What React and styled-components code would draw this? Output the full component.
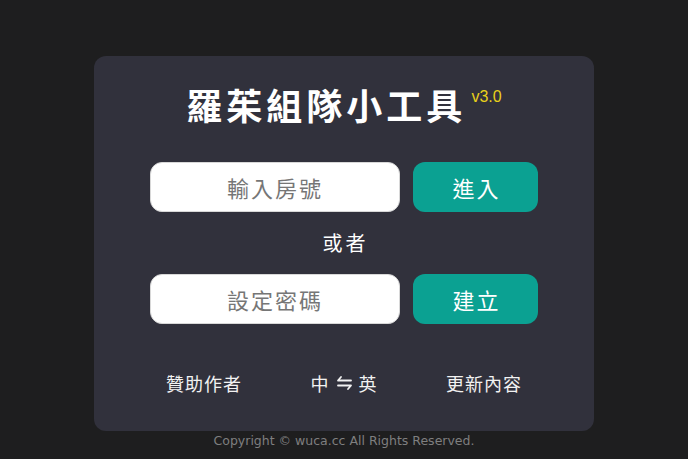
import React from 'react';
import styled, {createGlobalStyle} from 'styled-components';

const FONT = `"Noto Sans CJK TC", "Noto Sans", sans-serif`;
const TEAL = '#0ba192';

const GlobalStyle = createGlobalStyle`
  html, body {
    margin: 0;
    padding: 0;
    background: #1e1e1f;
    font-family: ${FONT};
  }
`;

const Page = styled.div`
  display: flex;
  flex-direction: column;
  align-items: center;
  padding-top: 56px;
  min-height: 403px;
`;

const Card = styled.div`
  width: 500px;
  height: 375px;
  box-sizing: border-box;
  background: #31313c;
  border-radius: 12px;
  display: flex;
  flex-direction: column;
  align-items: center;
  padding-top: 24px;
`;

const Title = styled.h1`
  margin: 0;
  font-size: 36px;
  line-height: 48px;
  font-weight: 700;
  color: #ffffff;
  letter-spacing: 4px;
  display: flex;
  align-items: flex-start;
  padding-left: 0;
`;

const Version = styled.sup`
  font-family: "Liberation Sans", sans-serif;
  font-size: 16px;
  line-height: 16px;
  font-weight: 400;
  letter-spacing: 0;
  color: #e8d01a;
  margin-top: 9px;
  margin-left: 5px;
`;

const Form = styled.div`
  margin-top: 34px;
  display: flex;
  flex-direction: column;
  align-items: center;
`;

const Row = styled.div`
  display: flex;
  gap: 13px;
`;

const Field = styled.input`
  width: 250px;
  height: 50px;
  box-sizing: border-box;
  border: 1px solid #d8d8d8;
  border-radius: 12px;
  background: #ffffff;
  font-family: ${FONT};
  font-size: 22px;
  letter-spacing: 2px;
  text-align: center;
  color: #333;
  outline: none;
  &::placeholder {
    color: #767676;
  }
`;

const Button = styled.button`
  width: 125px;
  height: 50px;
  border: none;
  border-radius: 12px;
  background: ${TEAL};
  color: #ffffff;
  font-family: ${FONT};
  font-size: 22px;
  letter-spacing: 2px;
  text-indent: 2px;
  cursor: pointer;
`;

const Or = styled.div`
  height: 62px;
  line-height: 62px;
  font-size: 20px;
  color: #ffffff;
  letter-spacing: 3px;
  text-indent: 3px;
`;

const Links = styled.div`
  margin-top: 46px;
  display: grid;
  grid-template-columns: repeat(3, 140px);
  justify-items: center;
`;

const Link = styled.a`
  display: flex;
  align-items: center;
  gap: 6px;
  font-size: 18px;
  line-height: 26px;
  color: #f2f2f2;
  letter-spacing: 1px;
  text-decoration: none;
  cursor: pointer;
`;

const Copyright = styled.div`
  margin-top: 1px;
  font-family: "DejaVu Sans", sans-serif;
  font-size: 12.5px;
  line-height: 18px;
  color: #7f7f7f;
`;

const SwapIcon = () => (
  <svg width="17" height="16" viewBox="0 0 17 16" fill="none" stroke="#f2f2f2"
       strokeWidth="1.8" strokeLinecap="round" strokeLinejoin="round">
    <path d="M5 2 L2 5.5 H15"/>
    <path d="M2 10.5 H15 L12 14"/>
  </svg>
);

export default function App() {
  return (
    <>
      <GlobalStyle/>
      <Page>
        <Card>
          <Title>
            羅茱組隊小工具<Version>v3.0</Version>
          </Title>
          <Form>
            <Row>
              <Field placeholder="輸入房號"/>
              <Button>進入</Button>
            </Row>
            <Or>或者</Or>
            <Row>
              <Field placeholder="設定密碼"/>
              <Button>建立</Button>
            </Row>
          </Form>
          <Links>
            <Link>贊助作者</Link>
            <Link>中 <SwapIcon/> 英</Link>
            <Link>更新內容</Link>
          </Links>
        </Card>
        <Copyright>Copyright © wuca.cc All Rights Reserved.</Copyright>
      </Page>
    </>
  );
}
